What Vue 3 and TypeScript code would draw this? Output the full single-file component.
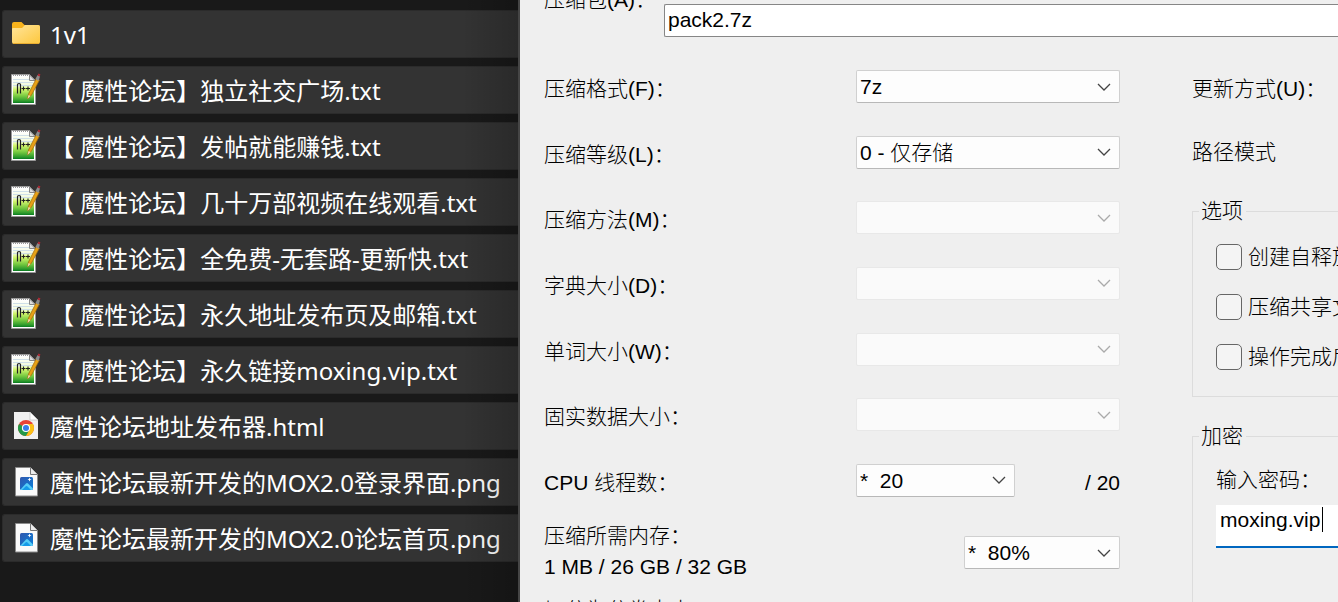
<script setup lang="ts">
import { ref } from 'vue'

type Kind = 'folder' | 'notepad' | 'chrome' | 'image'
interface FileItem { name: string; kind: Kind }
interface Choice { id: string; label: string; value: string; disabled: boolean }

const files: FileItem[] = [
  { name: '1v1', kind: 'folder' },
  { name: '【 魔性论坛】独立社交广场.txt', kind: 'notepad' },
  { name: '【 魔性论坛】发帖就能赚钱.txt', kind: 'notepad' },
  { name: '【 魔性论坛】几十万部视频在线观看.txt', kind: 'notepad' },
  { name: '【 魔性论坛】全免费-无套路-更新快.txt', kind: 'notepad' },
  { name: '【 魔性论坛】永久地址发布页及邮箱.txt', kind: 'notepad' },
  { name: '【 魔性论坛】永久链接moxing.vip.txt', kind: 'notepad' },
  { name: '魔性论坛地址发布器.html', kind: 'chrome' },
  { name: '魔性论坛最新开发的MOX2.0登录界面.png', kind: 'image' },
  { name: '魔性论坛最新开发的MOX2.0论坛首页.png', kind: 'image' },
]

const choices: Choice[] = [
  { id: 'format', label: '压缩格式(F)：', value: '7z', disabled: false },
  { id: 'level', label: '压缩等级(L)：', value: '0 - 仅存储', disabled: false },
  { id: 'method', label: '压缩方法(M)：', value: '', disabled: true },
  { id: 'dictionary', label: '字典大小(D)：', value: '', disabled: true },
  { id: 'word', label: '单词大小(W)：', value: '', disabled: true },
  { id: 'solid', label: '固实数据大小：', value: '', disabled: true },
]

const options = ['创建自释放程序', '压缩共享文件', '操作完成后删除源文件']
const archive = ref('pack2.7z')
const password = ref('moxing.vip')
</script>

<template>
  <main class="desktop">
    <section class="explorer">
      <ul class="files">
        <li v-for="file in files" :key="file.name">
          <button type="button" class="file">
            <svg v-if="file.kind === 'folder'" class="icon" viewBox="0 0 30 34">
              <defs>
                <linearGradient id="folder" x1="0" y1="0" x2="1" y2="1">
                  <stop offset="0" stop-color="#ffe59c" />
                  <stop offset="1" stop-color="#fdc73c" />
                </linearGradient>
              </defs>
              <path d="M1 7a2 2 0 0 1 2-2h7.500l3 3h13.500a2 2 0 0 1 2 2V19H1z" fill="#f8b31c" />
              <path d="M1 12q0-1 1-1h9l3-3h13a2 2 0 0 1 2 2v15a2 2 0 0 1-2 2H3a2 2 0 0 1-2-2z" fill="url(#folder)" />
              <path d="M2 26.500h26" stroke="#e9ad31" />
            </svg>
            <svg v-else-if="file.kind === 'notepad'" class="icon" viewBox="0 0 30 34">
              <defs>
                <linearGradient id="note" x1="0" y1="0" x2="0" y2="1">
                  <stop offset="0" stop-color="#ffffff" />
                  <stop offset=".35" stop-color="#f2fbdc" />
                  <stop offset=".5" stop-color="#d2f56c" />
                  <stop offset=".75" stop-color="#74c840" />
                  <stop offset=".93" stop-color="#2c9a2c" />
                  <stop offset="1" stop-color="#087a20" />
                </linearGradient>
              </defs>
              <path d="M.5 1.500h18l6 6v24H.5z" fill="#fff" stroke="#999" />
              <path d="M2 3h16l5 5v22H2z" fill="url(#note)" />
              <path d="M2 6.500h16M2 9.500h20M2 12.500h20" stroke="#cfdfe8" />
              <path d="M2 2.500h16" stroke="#999" stroke-dasharray="1 1" />
              <path d="M18.500 2v5.500H24z" fill="#ddd" stroke="#888" />
              <path d="M6.500 20.500v-9q0-1 1.500-1t1.500 1v9" fill="none" stroke="#222" stroke-width="1.200" />
              <path d="M10.500 15.500h4M12.500 13.500v4M15 15.500h4M17 13.500v4" stroke="#222" stroke-width="1.100" />
              <path d="M16.500 26l1-5 8-16 3 2-8 15z" fill="#e6a117" stroke="#9b650b" stroke-width=".7" />
              <path d="M16.500 26l1-4 2 1z" fill="#eedcb5" />
              <path d="M24.500 6l2-4 2.500 1.500L27.500 8z" fill="#8b8b8b" />
              <path d="M26.500 2.500L27.500 .5l2 1-1 2z" fill="#ad2b35" />
            </svg>
            <svg v-else-if="file.kind === 'chrome'" class="icon" viewBox="0 0 30 34">
              <path d="M3 3h16l8 8v19H3z" fill="#f1f1f1" />
              <path d="M19 3v8h8z" fill="#fff" stroke="#bbb" stroke-width=".6" />
              <circle cx="15" cy="19" r="8" fill="#e94235" />
              <path d="M8.070 15A8 8 0 0 0 15 27l3.500-6L15 19z" fill="#249a48" />
              <path d="M15 27a8 8 0 0 0 6.930-12H15v4l3.500 2z" fill="#fbc116" />
              <circle cx="15" cy="19" r="4.100" fill="#fff" />
              <circle cx="15" cy="19" r="3" fill="#397de9" />
            </svg>
            <svg v-else class="icon" viewBox="0 0 30 34">
              <defs>
                <linearGradient id="photo" x1="0" y1="0" x2="1" y2="1">
                  <stop offset="0" stop-color="#3157ad" />
                  <stop offset="1" stop-color="#087fda" />
                </linearGradient>
              </defs>
              <path d="M4.500 2.500h15l7 7v21.500h-22z" fill="#fafafa" stroke="#8b8b8b" />
              <path d="M19.500 2.500v7h7" fill="#ececec" stroke="#777" />
              <rect x="9" y="12" width="13" height="13" rx="1.500" fill="url(#photo)" />
              <path d="M9.500 24.500l5.500-6q1-1 2 0l5 5-1 1.500H10z" fill="#55cdf7" />
              <path d="M11 25l3.500-3.500q1-1 2 0L20 25z" fill="#159be9" />
              <path d="M18.500 12.500l.6 1.400 1.400.6-1.400.6-.6 1.400-.6-1.400-1.400-.6 1.400-.6z" fill="#fff" />
            </svg>
            <span>{{ file.name }}</span>
          </button>
        </li>
      </ul>
    </section>

    <form class="dialog" @submit.prevent>
      <div class="archive">
        <label for="archive">压缩包(A)：</label>
        <input id="archive" v-model="archive" type="text" />
      </div>

      <div class="columns">
        <div class="settings">
          <div class="choices">
            <div v-for="choice in choices" :key="choice.id" class="choice">
              <label :for="choice.id">{{ choice.label }}</label>
              <span class="combo wide">
                <select :id="choice.id" :disabled="choice.disabled">
                  <option>{{ choice.value }}</option>
                </select>
                <svg viewBox="0 0 14 8"><path d="M1 1l6 6 6-6" /></svg>
              </span>
            </div>
            <div class="choice">
              <label for="threads">CPU 线程数：</label>
              <span class="threads">
                <span class="combo">
                  <select id="threads"><option>*&nbsp;&nbsp;20</option></select>
                  <svg viewBox="0 0 14 8"><path d="M1 1l6 6 6-6" /></svg>
                </span>
                <span class="total">/ 20</span>
              </span>
            </div>
          </div>

          <div class="memory">
            <label for="memory">压缩所需内存：<br />1 MB / 26 GB / 32 GB</label>
            <span class="combo">
              <select id="memory"><option>*&nbsp;&nbsp;80%</option></select>
              <svg viewBox="0 0 14 8"><path d="M1 1l6 6 6-6" /></svg>
            </span>
          </div>
          <p class="volume">切分为分卷大小</p>
        </div>

        <div class="extras">
          <p class="update">更新方式(U)：</p>
          <p class="path">路径模式</p>
          <fieldset class="options">
            <legend>选项</legend>
            <label v-for="option in options" :key="option">
              <input type="checkbox" />{{ option }}
            </label>
          </fieldset>
          <fieldset class="encryption">
            <legend>加密</legend>
            <label for="password">输入密码：</label>
            <div class="password">
              <input id="password" v-model="password" type="text" />
              <span class="caret"></span>
            </div>
          </fieldset>
        </div>
      </div>
    </form>
  </main>
</template>

<style>
html,
body {
  margin: 0;
  overflow: hidden;
}
</style>

<style scoped>
* {
  box-sizing: border-box;
}
.desktop {
  display: grid;
  grid-template-columns: minmax(0, 518fr) minmax(0, 820fr);
  height: 100vh;
  overflow: hidden;
  background: #191919;
}
.explorer {
  position: relative;
  min-width: 0;
  overflow: hidden;
  padding: 10px 0 0 2px;
}
.explorer::after {
  content: '';
  position: absolute;
  inset: 0 0 0 auto;
  width: 56px;
  background: linear-gradient(90deg, transparent, rgba(0, 0, 0, 0.18));
  pointer-events: none;
}
.files {
  display: grid;
  gap: 8px;
  margin: 0;
  padding: 0;
  list-style: none;
}
.file {
  display: flex;
  align-items: center;
  gap: 9px;
  width: 100%;
  height: 48px;
  padding: 0 0 0 8px;
  border: 1px solid #2b2b2b;
  border-right: 0;
  border-radius: 3px 0 0 3px;
  background: #333;
  color: #fff;
  font: 400 24px/32px "Noto Sans", "Noto Sans CJK SC", sans-serif;
  white-space: nowrap;
  text-align: left;
}
.file span {
  padding-top: 2px;
}
.icon {
  flex: none;
  width: 30px;
  height: 34px;
}
.dialog {
  min-width: 0;
  overflow: hidden;
  border-left: 2px solid #454545;
  padding: 4px 0 0 24px;
  background: #efefef;
  color: #000;
  font: 300 21px/32px "Liberation Sans", "Noto Sans CJK SC", sans-serif;
  white-space: nowrap;
}
p {
  margin: 0;
}
.archive {
  display: grid;
  grid-template-columns: 120px minmax(0, 1fr);
}
.archive label {
  margin-top: -20px;
}
input,
select {
  min-width: 0;
  margin: 0;
  color: #000;
  font: inherit;
  outline: 0;
}
.archive input {
  height: 33px;
  padding: 0 3px 2px;
  border: 1px solid #868686;
  border-right: 0;
  border-radius: 2px 0 0 2px;
  background: #fff;
}
.columns {
  display: grid;
  grid-template-columns: minmax(0, 576fr) minmax(0, 146fr);
  column-gap: 72px;
  padding-top: 33px;
}
.choices {
  display: flex;
  flex-direction: column;
  justify-content: space-between;
  min-height: 427px;
}
.choice,
.memory {
  display: flex;
  justify-content: space-between;
}
.choice label,
.total,
.update {
  padding-top: 3px;
  height: 33px;
}
.combo {
  display: grid;
  align-items: center;
  width: 156px;
}
.wide {
  width: 264px;
}
.combo select,
.combo svg {
  grid-area: 1 / 1;
}
.combo select {
  width: 100%;
  height: 33px;
  padding: 0 28px 0 3px;
  border: 1px solid #d0d0d0;
  border-bottom-color: #b8b8b8;
  border-radius: 2px;
  background: #fdfdfd;
  appearance: none;
}
.combo select:disabled {
  border-color: #e8e8e8;
  background: #fafafa;
  opacity: 1;
}
.combo svg {
  justify-self: end;
  width: 14px;
  height: 8px;
  margin-right: 9px;
  fill: none;
  stroke: #444;
  stroke-width: 1.3;
  pointer-events: none;
}
.combo select:disabled + svg {
  stroke: #aaa;
}
.threads {
  display: flex;
  justify-content: space-between;
  width: 264px;
}
.threads .combo {
  width: 159px;
}
.memory {
  padding-top: 23px;
  line-height: 31px;
}
.memory .combo {
  align-self: flex-start;
  margin-top: 16px;
}
.volume {
  padding-top: 12px;
}
.path {
  padding-top: 33px;
}
fieldset {
  min-width: 0;
  margin: 0;
  border: 1px solid #dcdcdc;
  border-right: 0;
}
legend {
  margin-left: -17px;
  padding: 0 3px 0 2px;
}
.options {
  display: grid;
  gap: 18px;
  margin-top: 27px;
  padding: 14px 0 23px 23px;
}
.options label {
  display: flex;
  align-items: center;
  gap: 6px;
}
.options input {
  flex: none;
  width: 26px;
  height: 26px;
  border: 1px solid #666;
  border-radius: 5px;
  background: #f4f4f4;
  appearance: none;
}
.encryption {
  margin-top: 23px;
  padding: 12px 0 80px 23px;
}
.encryption label {
  display: block;
}
.password {
  display: flex;
  height: 43px;
  margin-top: 9px;
  border-bottom: 2px solid #0067c0;
  background: #fff;
}
.password input {
  width: 106px;
  height: 30px;
  padding: 0 0 0 4px;
  border: 0;
  background: transparent;
}
.caret {
  width: 1px;
  height: 25px;
  margin-top: 2px;
  background: #000;
}
</style>
